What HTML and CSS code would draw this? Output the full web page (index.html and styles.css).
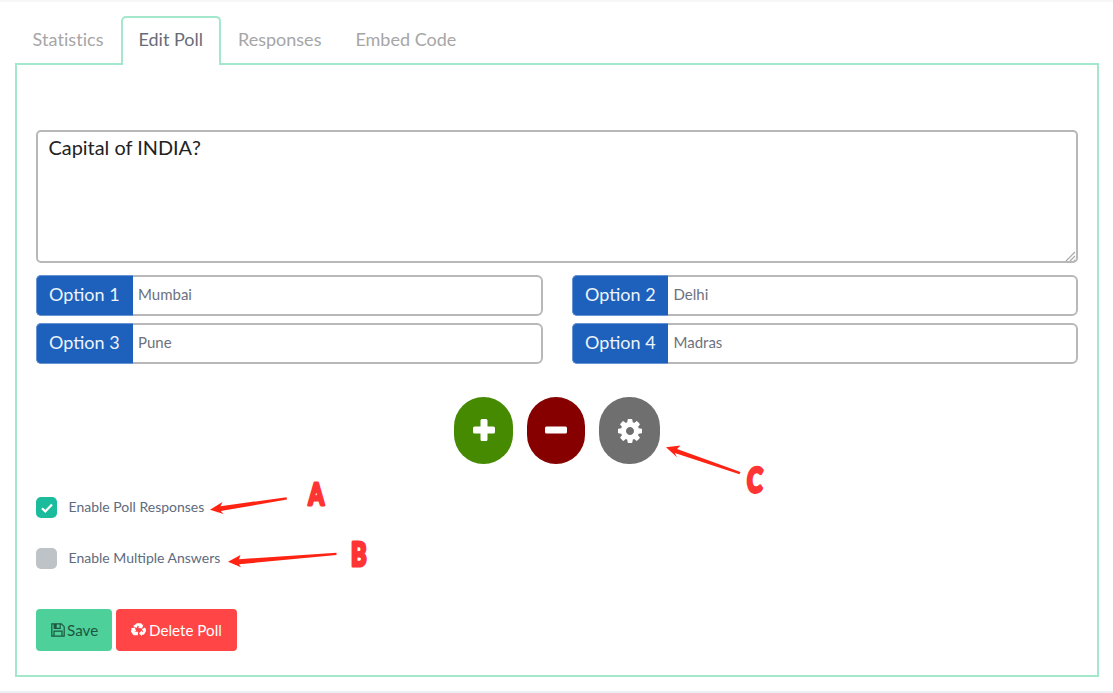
FILE: index.html
```html
<!DOCTYPE html>
<html lang="en">
<head>
<meta charset="utf-8">
<title>Edit Poll</title>
<link rel="stylesheet" href="styles.css">
</head>
<body>
<main class="page">
  <nav class="tabs">
    <a class="tab tab-stats">Statistics</a>
    <a class="tab active">Edit Poll</a>
    <a class="tab">Responses</a>
    <a class="tab">Embed Code</a>
  </nav>
  <section class="panel">
    <div class="question">Capital of INDIA?
      <svg class="grip" width="12" height="12" viewBox="0 0 12 12"><path d="M1 11 10 2M5 11l5-5M9 11l1-1"/></svg>
    </div>
    <div class="options">
      <div class="option"><span class="label">Option 1</span><span class="value">Mumbai</span></div>
      <div class="option"><span class="label">Option 2</span><span class="value">Delhi</span></div>
      <div class="option"><span class="label">Option 3</span><span class="value">Pune</span></div>
      <div class="option"><span class="label">Option 4</span><span class="value">Madras</span></div>
    </div>
    <div class="actions">
      <div class="round add"><svg width="22" height="22" viewBox="0 0 22 22"><path d="M9 0h4q1.500 0 1.500 1.500V7.500h6Q22 7.500 22 9v4q0 1.500-1.500 1.500h-6v6Q14.500 22 13 22H9q-1.500 0-1.500-1.500v-6h-6Q0 14.500 0 13V9q0-1.500 1.500-1.500h6v-6Q7.500 0 9 0z"/></svg></div>
      <div class="round remove"><svg width="22" height="22" viewBox="0 0 22 22"><rect y="7.500" width="22" height="7" rx="1.500"/></svg></div>
      <div class="round settings"><svg width="24" height="24" viewBox="0 0 1536 1536"><path d="M1024 768q0-106-75-181t-181-75-181 75-75 181 75 181 181 75 181-75 75-181zm512-109v222q0 12-8 23t-20 13l-185 28q-19 54-39 91 35 50 107 138 10 12 10 25t-9 23q-27 37-99 108t-94 71q-12 0-26-9l-138-108q-44 23-91 38-16 136-29 186-7 28-36 28H657q-14 0-24.500-8.500T621 1506l-28-184q-49-16-90-37l-141 107q-10 9-25 9-14 0-25-11-126-114-165-168-7-10-7-23 0-12 8-23 15-21 51-66.500t54-70.500q-27-50-41-99L29 913q-13-2-21-12.500T0 877V655q0-12 8-23t19-13l186-28q14-46 39-92-40-57-107-138-10-12-10-24 0-10 9-23 26-36 98.500-107.500T337 135q13 0 26 10l138 107q44-23 91-38 16-136 29-186 7-28 36-28h222q14 0 24.500 8.500T915 30l28 184q49 16 90 37l142-107q9-9 24-9 13 0 25 10 129 119 165 170 7 8 7 22 0 12-8 23-15 21-51 66.500t-54 70.500q26 50 41 98l183 28q13 2 21 12.500t8 23.500z"/></svg></div>
    </div>
    <div class="checks">
      <div class="check"><span class="box on"><svg width="12" height="10" viewBox="0 0 12 10"><path d="M1 5.200 4.300 8.400 11 1.400"/></svg></span><span class="caption">Enable Poll Responses</span></div>
      <div class="check second"><span class="box"></span><span class="caption">Enable Multiple Answers</span></div>
    </div>
    <div class="buttons">
      <div class="btn save"><svg width="14" height="14" viewBox="0 0 14 14"><path d="M.8.800h9.500l2.900 2.900v9.500H.8zM3.200.800v4.500h6V.800M3 13V8.200h8V13" fill="none" stroke="currentColor" stroke-width="1.200"/><path d="M3.200 1h2.500v4.200H3.200z"/></svg><span>Save</span></div>
      <div class="btn delete"><svg width="15" height="15" viewBox="0 0 15 15"><path d="M4.700 1.200Q5.300.200 6.400.200h3q.9 0 1.400.9l.6 1 1-.6-1.300 4-4.100-.8 1.100-.6-1.100-1.700-1.600 2.600-3.300-1.900zM10.900 6.200l3-1.700 1 1.800q.5.900 0 1.900l-1.400 2.500q-.5 1-1.600 1h-1v1.500L7.900 10.300l3-2.900v1.300h1.500zM6.900 8.700v3.500H3.300q-1.100 0-1.600-.9L.2 8.700q-.5-.9.100-1.800l.5-.9-1-.6 4.100-.8 1.200 4-1.100-.6-.6.700z"/></svg><span>Delete Poll</span></div>
    </div>
  </section>
  <svg class="notes" width="1113" height="693" viewBox="0 0 1113 693">
    <g class="arrows">
      <path d="M210 509.700 222.500 502 220.500 506.200 286.500 497.200 287 499.500 220.800 511 223.500 514z"/>
      <path d="M228 561.700 240.500 555 239 559.200 336.500 552.700V555L239 564.300 241 567.200z"/>
      <path d="M666 447.200 680.500 445.500 677 449 740.500 472 739.500 474.200 674.800 453 677 457.300z"/>
    </g>
    <g class="letters">
      <text transform="translate(308.500 505) scale(.74 1)">A</text>
      <text transform="translate(351 566) scale(.78 1.080)">B</text>
      <text transform="translate(746.500 491.500) skewX(-3) scale(.78 1.120)">C</text>
    </g>
  </svg>
</main>
</body>
</html>
```
FILE: styles.css
```css
* { box-sizing: border-box; }
body { margin: 0; background: #fff; font-family: Lato, sans-serif; }
.page { position: relative; width: 1113px; height: 693px; padding: 14px 14px 0 15px; border-top: 2px solid #f7f7f7; border-bottom: 2px solid #edf1f5; overflow: hidden; }
.tabs { display: flex; height: 49px; position: relative; z-index: 1; }
.tab { padding: 0 17px; line-height: 47px; font-size: 18px; color: #a6a6a6; white-space: nowrap; }
.tab-stats { width: 106px; padding: 0 0 0 17.500px; letter-spacing: .08px; }
.tab.active { width: 100px; padding: 0 0 0 15.500px; line-height: 43px; color: #686c78; background: #fff; border: 2px solid #a3e8cc; border-bottom: 0; border-radius: 5px 5px 0 0; }
.panel { height: 614px; margin-top: -2px; padding: 65px 19px 0 19px; border: 2px solid #a3e8cc; }
.question { position: relative; height: 133px; padding: 0 10.500px; border: 2px solid #b8b8b8; border-radius: 5px; font-size: 19.900px; line-height: 31px; color: #222; }
.grip { position: absolute; right: -1px; bottom: -1px; fill: none; stroke: #aaa; stroke-width: 1.200; }
.options { display: grid; grid-template-columns: 507px 506px; column-gap: 29px; row-gap: 7px; margin-top: 12px; }
.option { display: flex; height: 41px; border: 2px solid #b8b8b8; border-radius: 6px; }
.label { width: 97px; margin: -2px 0 -2px -2px; padding-left: 12px; border: 1px solid #6794d4; border-width: 1px 0 1px 1px; border-radius: 5px 0 0 5px; background: #1d61bc; color: #edf3fb; font-size: 18px; line-height: 37px; white-space: nowrap; }
.value { padding-left: 5px; color: #6c727e; font-size: 15px; line-height: 35px; }
.option:nth-child(even) .label { width: 96px; }
.option:nth-child(even) .value { padding-left: 5.500px; }
.actions { display: flex; margin: 33px 0 0 418px; gap: 14px; }
.round { display: flex; align-items: center; justify-content: center; width: 59px; height: 67px; border-radius: 30px; background: #458a00; fill: #fff; }
.round svg { margin-bottom: 1px; }
.round.remove { width: 58px; background: #860000; }
.round.settings { width: 61px; background: #6f6f6f; }
.round.settings svg { margin-bottom: 0; }
.checks { margin-top: 33px; }
.check { display: flex; align-items: center; gap: 11.500px; height: 21px; color: #606b7e; font-size: 14px; line-height: 20px; }
.caption { padding-bottom: 1px; }
.check.second { margin-top: 30px; }
.box { display: flex; align-items: center; justify-content: center; width: 21px; height: 21px; border-radius: 5px; background: #bdc3c7; }
.box.on { background: #1abc9c; }
.box svg { fill: none; stroke: #fff; stroke-width: 2.200; }
.buttons { display: flex; gap: 4px; margin-top: 40px; }
.btn { display: flex; align-items: center; height: 42px; border-radius: 4px; font-size: 15.200px; white-space: nowrap; fill: currentColor; }
.save { width: 76px; padding-left: 15px; gap: 2px; background: #4dd09a; color: #1d5640; }
.delete { width: 121px; padding-left: 15px; gap: 3px; background: #ff4545; color: #fff; }
.notes { position: absolute; left: 0; top: -2px; z-index: 2; pointer-events: none; }
.arrows { fill: #ff2314; }
.letters { fill: #ff3535; stroke: #ff3535; stroke-width: 3; stroke-linejoin: round; font: 900 30px Lato, sans-serif; }
```
